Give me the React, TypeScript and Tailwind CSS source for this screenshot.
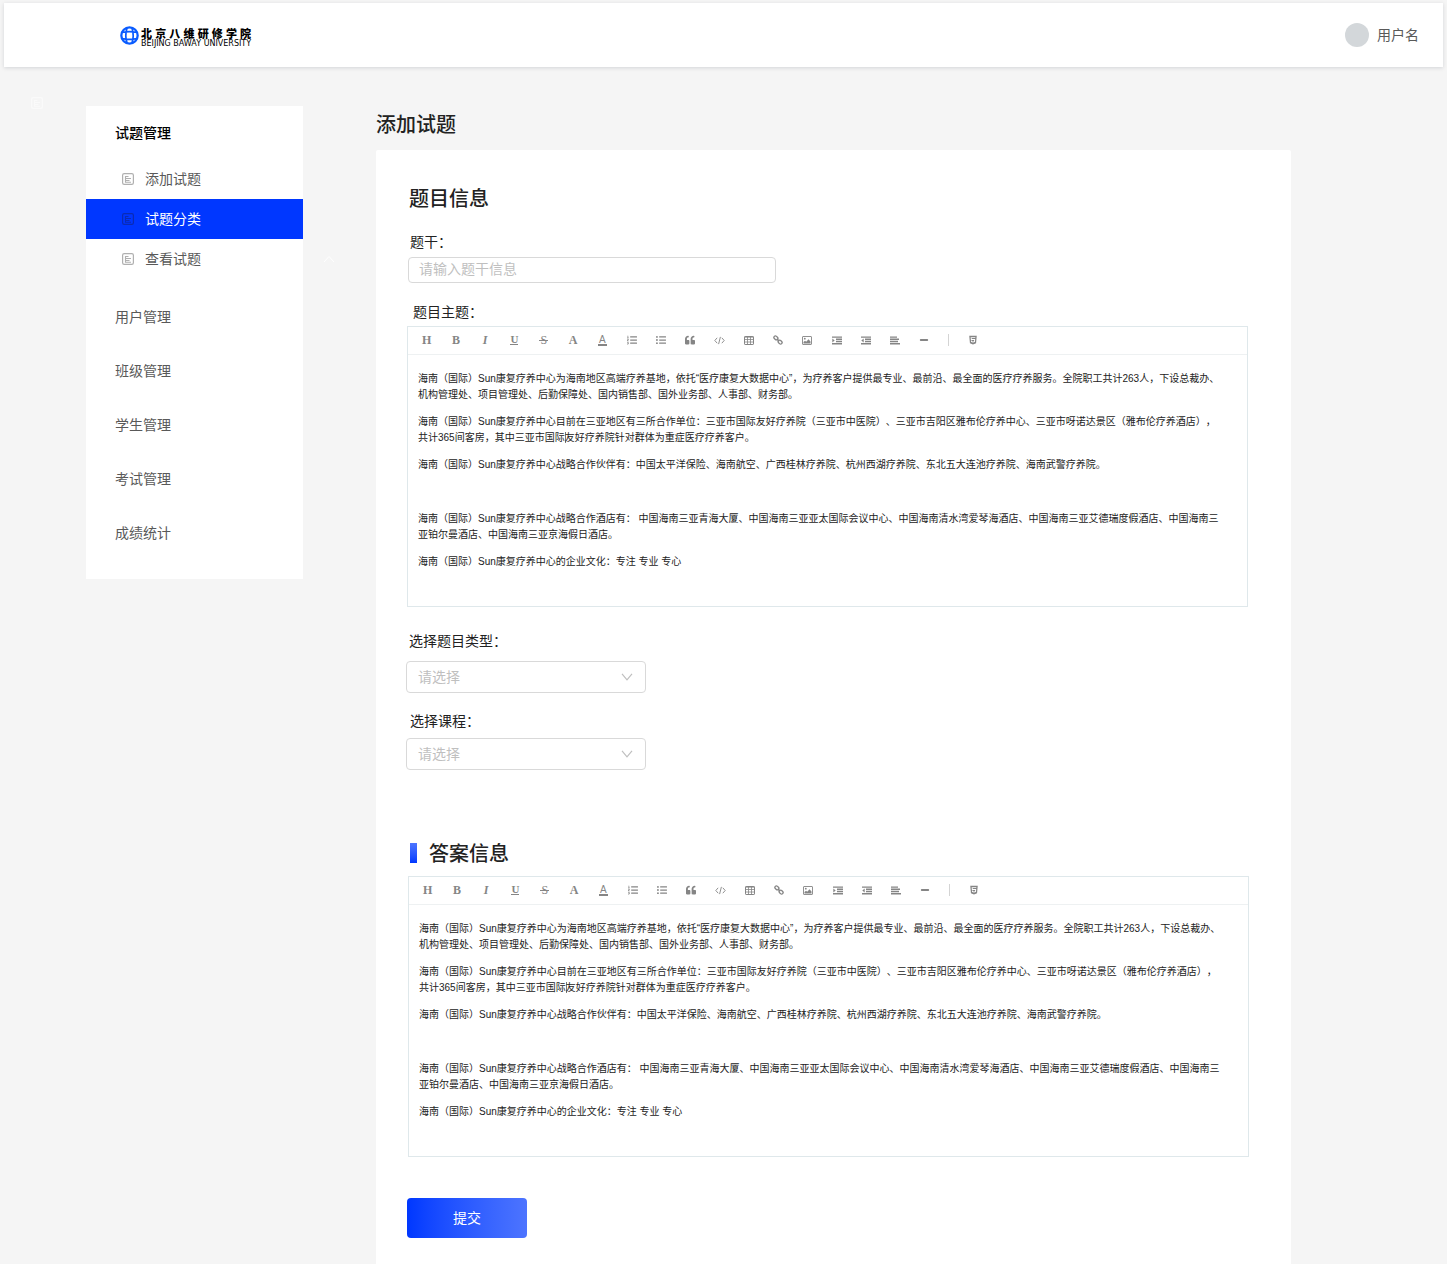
import type { ReactNode } from "react";
import { FaHtml5, FaListOl, FaListUl, FaQuoteLeft } from "react-icons/fa";

function DocIcon({ className }: { className: string }) {
  return (
    <svg viewBox="0 0 12 12" className={className} fill="none" stroke="currentColor" aria-hidden="true">
      <rect x="0.6" y="0.6" width="10.8" height="10.8" rx="1.6" strokeWidth="1.2" />
      <path d="M3 3.500h3.500M3 5.500h6M3 7.500h4.500M3 9.300h6M3.500 3v6.500" strokeWidth="1.1" />
    </svg>
  );
}

function Logo() {
  return (
    <a href="#" aria-label="北京八维研修学院" className="flex w-[130px] items-center gap-0.5 text-black">
      <svg viewBox="0 0 20 20" className="mt-px size-[19px] shrink-0" fill="none" stroke="#0a5cff" aria-hidden="true">
        <circle cx="10" cy="10" r="8.6" strokeWidth="2.4" />
        <path
          d="M7.400 2C5.800 7 5.800 13 7.400 18M12.600 2c1.600 5 1.600 11 0 16M2 6.800c5-1 11-1 16 0M2 13.200c5 1 11 1 16 0"
          strokeWidth="1.8"
        />
      </svg>
      <span className="flex flex-1 flex-col pt-1">
        <span className="flex justify-between text-[11px] leading-[13px] font-black">
          {"北京八维研修学院".split("").map((c) => (
            <span key={c}>{c}</span>
          ))}
        </span>
        <span className="font-['DejaVu_Sans'] text-[8px] leading-[7px] font-normal whitespace-nowrap">
          BEIJING BAWAY UNIVERSITY
        </span>
      </span>
    </a>
  );
}

function ToolIcon({ children }: { children: ReactNode }) {
  return (
    <svg viewBox="0 0 10 9" className="h-[9px] w-[10px]" fill="none" stroke="currentColor" aria-hidden="true">
      {children}
    </svg>
  );
}

const serif = "font-['Liberation_Serif'] text-[12px] leading-3 font-bold";

const tools: { name: string; icon: ReactNode }[] = [
  { name: "标题", icon: <span className={serif}>H</span> },
  { name: "加粗", icon: <span className={serif}>B</span> },
  { name: "斜体", icon: <span className="font-['Liberation_Serif'] text-[12px] leading-3 font-bold italic">I</span> },
  {
    name: "下划线",
    icon: (
      <span className="border-b border-current font-['Liberation_Serif'] text-[11px] leading-[9px] font-bold">U</span>
    ),
  },
  {
    name: "删除线",
    icon: (
      <span className="relative font-['Liberation_Serif'] text-[12px] leading-3">
        S
        <span className="absolute -inset-x-px top-1.5 h-px bg-current" />
      </span>
    ),
  },
  { name: "文字颜色", icon: <span className={serif}>A</span> },
  {
    name: "背景颜色",
    icon: (
      <span className="border-b-2 border-current px-px font-['Liberation_Sans'] text-[10px] leading-[9px]">A</span>
    ),
  },
  { name: "有序列表", icon: <FaListOl /> },
  { name: "无序列表", icon: <FaListUl /> },
  { name: "引用", icon: <FaQuoteLeft /> },
  {
    name: "代码",
    icon: (
      <svg viewBox="0 0 12 10" className="h-[9px] w-[11px]" fill="none" stroke="currentColor" aria-hidden="true">
        <path d="M3.400 2 .8 5l2.600 3M8.600 2l2.600 3-2.600 3M7 1 5 9" />
      </svg>
    ),
  },
  {
    name: "表格",
    icon: (
      <ToolIcon>
        <rect x="0.5" y="0.5" width="9" height="8" rx="0.6" />
        <path d="M.5 1.200h9M.5 3.500h9M.5 6h9M3.500 1v7.500M6.500 1v7.500" strokeWidth="0.8" />
      </ToolIcon>
    ),
  },
  {
    name: "链接",
    icon: (
      <svg viewBox="0 0 10 10" className="size-[10px]" fill="none" stroke="currentColor" strokeWidth="1.3" aria-hidden="true">
        <rect x="-2.200" y="-1.500" width="4.400" height="3" rx="1.500" transform="translate(2.900 2.900) rotate(45)" />
        <rect x="-2.200" y="-1.500" width="4.400" height="3" rx="1.500" transform="translate(7.100 7.100) rotate(45)" />
        <path d="M3.800 3.800l2.400 2.400" />
      </svg>
    ),
  },
  {
    name: "图片",
    icon: (
      <ToolIcon>
        <rect x="0.5" y="0.5" width="9" height="8" rx="0.5" strokeWidth="0.9" />
        <path d="M1.500 7.500V6l1.500-1.300 1.200 1L6.500 3.200l2 2.300v2z" fill="currentColor" stroke="none" />
        <circle cx="2.800" cy="2.700" r="0.9" fill="currentColor" stroke="none" />
      </ToolIcon>
    ),
  },
  {
    name: "增加缩进",
    icon: (
      <ToolIcon>
        <path d="M0 1.100h10M4 3.300h6M4 5.500h6M0 7.700h10" strokeWidth="1.400" />
        <path d="M.3 2.400v4l2.400-2z" fill="currentColor" stroke="none" />
      </ToolIcon>
    ),
  },
  {
    name: "减少缩进",
    icon: (
      <ToolIcon>
        <path d="M0 1.100h10M4 3.300h6M4 5.500h6M0 7.700h10" strokeWidth="1.400" />
        <path d="M2.700 2.400v4l-2.400-2z" fill="currentColor" stroke="none" />
      </ToolIcon>
    ),
  },
  {
    name: "对齐",
    icon: (
      <ToolIcon>
        <path d="M0 1.100h7M0 3.300h9M0 5.500h8M0 7.700h10" strokeWidth="1.400" />
      </ToolIcon>
    ),
  },
  {
    name: "分割线",
    icon: (
      <ToolIcon>
        <path d="M1.800 4h6.400" strokeWidth="2" strokeLinecap="round" />
      </ToolIcon>
    ),
  },
];

function Caret() {
  return <span className="-mr-px border-l border-[#777]" />;
}

const paragraphs: ReactNode[][] = [
  [
    "海南（国际）Sun康复疗养中心为海南地区高端疗养基地，依托“医疗康复大数据中心”，为疗养客户提供最专业、最前沿、最全面的医疗疗养服务。全院职工共计263人，下设总裁办、",
    "机构管理处、项目管理处、后勤保障处、国内销售部、国外业务部、人事部、财务部。",
  ],
  [
    "海南（国际）Sun康复疗养中心目前在三亚地区有三所合作单位：三亚市国际友好疗养院（三亚市中医院）、三亚市吉阳区雅布伦疗养中心、三亚市呀诺达景区（雅布伦疗养酒店），",
    <>
      共计365间客房，其中三亚市国际
      <Caret />
      友好疗养院针对群体为重症医疗疗养客户。
    </>,
  ],
  [
    "海南（国际）Sun康复疗养中心战略合作伙伴有：中国太平洋保险、海南航空、广西桂林疗养院、杭州西湖疗养院、东北五大连池疗养院、海南武警疗养院。",
  ],
  ["\u00a0"],
  [
    "海南（国际）Sun康复疗养中心战略合作酒店有： 中国海南三亚青海大厦、中国海南三亚亚太国际会议中心、中国海南清水湾爱琴海酒店、中国海南三亚艾德瑞度假酒店、中国海南三",
    "亚铂尔曼酒店、中国海南三亚京海假日酒店。",
  ],
  ["海南（国际）Sun康复疗养中心的企业文化：专注 专业 专心"],
];

function Editor({ label }: { label: string }) {
  return (
    <div className="h-[281px] max-w-[841px] border border-[#dfe8eb]">
      <div className="flex h-7 items-center border-b border-[#eef1f2] pb-px pl-1 text-[10px] text-[#858585]">
        <div className="grid w-[527px] grid-cols-18">
          {tools.map((t) => (
            <button key={t.name} type="button" aria-label={t.name} className="flex h-5 items-center justify-center">
              {t.icon}
            </button>
          ))}
        </div>
        <span className="mr-[19px] ml-[9px] h-3 w-px bg-[#d4d4d4]" />
        <button type="button" aria-label="源码" className="flex h-5 items-center">
          <FaHtml5 />
        </button>
      </div>
      <div
        role="textbox"
        aria-multiline="true"
        aria-label={label}
        contentEditable
        suppressContentEditableWarning
        className="flex flex-col gap-[11px] overflow-hidden pt-4 pl-2.5 font-['Liberation_Sans','Noto_Sans_CJK_SC',sans-serif] text-[10px] leading-4 whitespace-nowrap text-[#222] outline-none [text-spacing-trim:space-all]"
      >
        {paragraphs.map((lines, i) => (
          <p key={i}>
            {lines.map((line, j) => (
              <span key={j} className="block">
                {line}
              </span>
            ))}
          </p>
        ))}
      </div>
    </div>
  );
}

function SelectBox({ id }: { id: string }) {
  return (
    <div className="relative -ml-0.5 w-60">
      <select
        id={id}
        defaultValue=""
        className="h-8 w-full appearance-none rounded border border-[#d9d9d9] bg-white px-[11px] pb-0.5 text-sm text-[#bfbfbf]"
      >
        <option value="">请选择</option>
      </select>
      <svg
        viewBox="0 0 12 8"
        className="pointer-events-none absolute top-3 right-[13px] h-2 w-3"
        fill="none"
        stroke="#bfbfbf"
        strokeWidth="1.2"
        aria-hidden="true"
      >
        <path d="M1 .8l5 6 5-6" />
      </svg>
    </div>
  );
}

const subItems = [
  { name: "添加试题", active: false },
  { name: "试题分类", active: true },
  { name: "查看试题", active: false },
];

const groups = ["用户管理", "班级管理", "学生管理", "考试管理", "成绩统计"];

export default function App() {
  return (
    <div className="relative flex min-h-screen flex-col bg-[#f5f5f5] pt-[3px] font-['Noto_Sans_CJK_SC',sans-serif] text-sm text-[#222]">
      <header className="mx-1 flex h-16 items-center justify-between bg-white pr-6 pl-[116px] shadow-[0_1px_4px_rgba(0,21,41,0.14)]">
        <Logo />
        <div className="flex items-center gap-2 text-[#595959]">
          <span className="size-6 rounded-full bg-[#d3d7da]" />
          <span className="pb-0.5">用户名</span>
        </div>
      </header>

      <DocIcon className="absolute top-[97px] left-[31px] size-3 text-[#fafafa]" />
      <svg
        viewBox="0 0 12 8"
        className="absolute top-[255px] left-[323px] h-2 w-3"
        fill="none"
        stroke="#fff"
        aria-hidden="true"
      >
        <path d="M1 7l5-5.500L11 7" />
      </svg>

      <div className="flex flex-1 items-start pl-[86px]">
        <nav className="mt-[39px] w-[217px] shrink-0 bg-white pb-[19px] text-[#595959]">
          <h2 className="flex h-[53px] items-center pb-0.5 pl-[29px] font-medium text-black">试题管理</h2>
          <ul className="mb-[11px]">
            {subItems.map((s) => (
              <li key={s.name}>
                <a
                  href="#"
                  className={
                    s.active
                      ? "flex h-10 items-center gap-[11px] bg-[#0037ff] pl-9 text-white"
                      : "flex h-10 items-center gap-[11px] pl-9"
                  }
                >
                  <DocIcon className={s.active ? "size-3 text-[#0a2bb4]" : "size-3 text-[#b0b0b0]"} />
                  <span className="pb-0.5">{s.name}</span>
                </a>
              </li>
            ))}
          </ul>
          <ul>
            {groups.map((g) => (
              <li key={g}>
                <a href="#" className="flex h-[54px] items-center pb-0.5 pl-[29px]">
                  {g}
                </a>
              </li>
            ))}
          </ul>
        </nav>

        <main className="mr-[156px] ml-[73px] flex min-w-0 flex-1 flex-col self-stretch pt-10">
          <h1 className="flex h-[43px] items-start text-xl leading-[34px] font-medium">添加试题</h1>
          <form className="flex-1 rounded-t-xs bg-white px-8 pt-8 pb-[26px]">
            <h2 className="mb-[15px] pl-px text-xl leading-8 font-medium">题目信息</h2>

            <label htmlFor="stem" className="mb-1 block pl-0.5 leading-6">
              题干：
            </label>
            <input
              id="stem"
              type="text"
              placeholder="请输入题干信息"
              className="mb-4 block h-[26px] w-[368px] rounded border border-[#d9d9d9] px-2.5 pb-1 placeholder:text-[#bfbfbf]"
            />

            <p className="mb-[3px] pl-[5px] leading-6">题目主题：</p>
            <div className="-ml-px">
              <Editor label="题目主题" />
            </div>

            <label htmlFor="type" className="mt-[21px] mb-[9px] block pl-px leading-6">
              选择题目类型：
            </label>
            <SelectBox id="type" />

            <label htmlFor="course" className="mt-[15px] mb-1.5 block pl-0.5 leading-6">
              选择课程：
            </label>
            <SelectBox id="course" />

            <h2 className="mt-[67px] mb-[7px] flex items-center gap-3 pl-0.5 text-xl leading-8 font-medium">
              <span className="h-5 w-[7px] bg-linear-to-b from-[#4d74ff] to-[#0037ff]" />
              答案信息
            </h2>
            <Editor label="答案信息" />

            <button
              type="submit"
              className="mt-[41px] -ml-px block h-10 w-[120px] rounded bg-linear-to-r from-[#0037ff] to-[#4d74ff] pb-0.5 text-white"
            >
              提交
            </button>
          </form>
        </main>
      </div>
    </div>
  );
}
